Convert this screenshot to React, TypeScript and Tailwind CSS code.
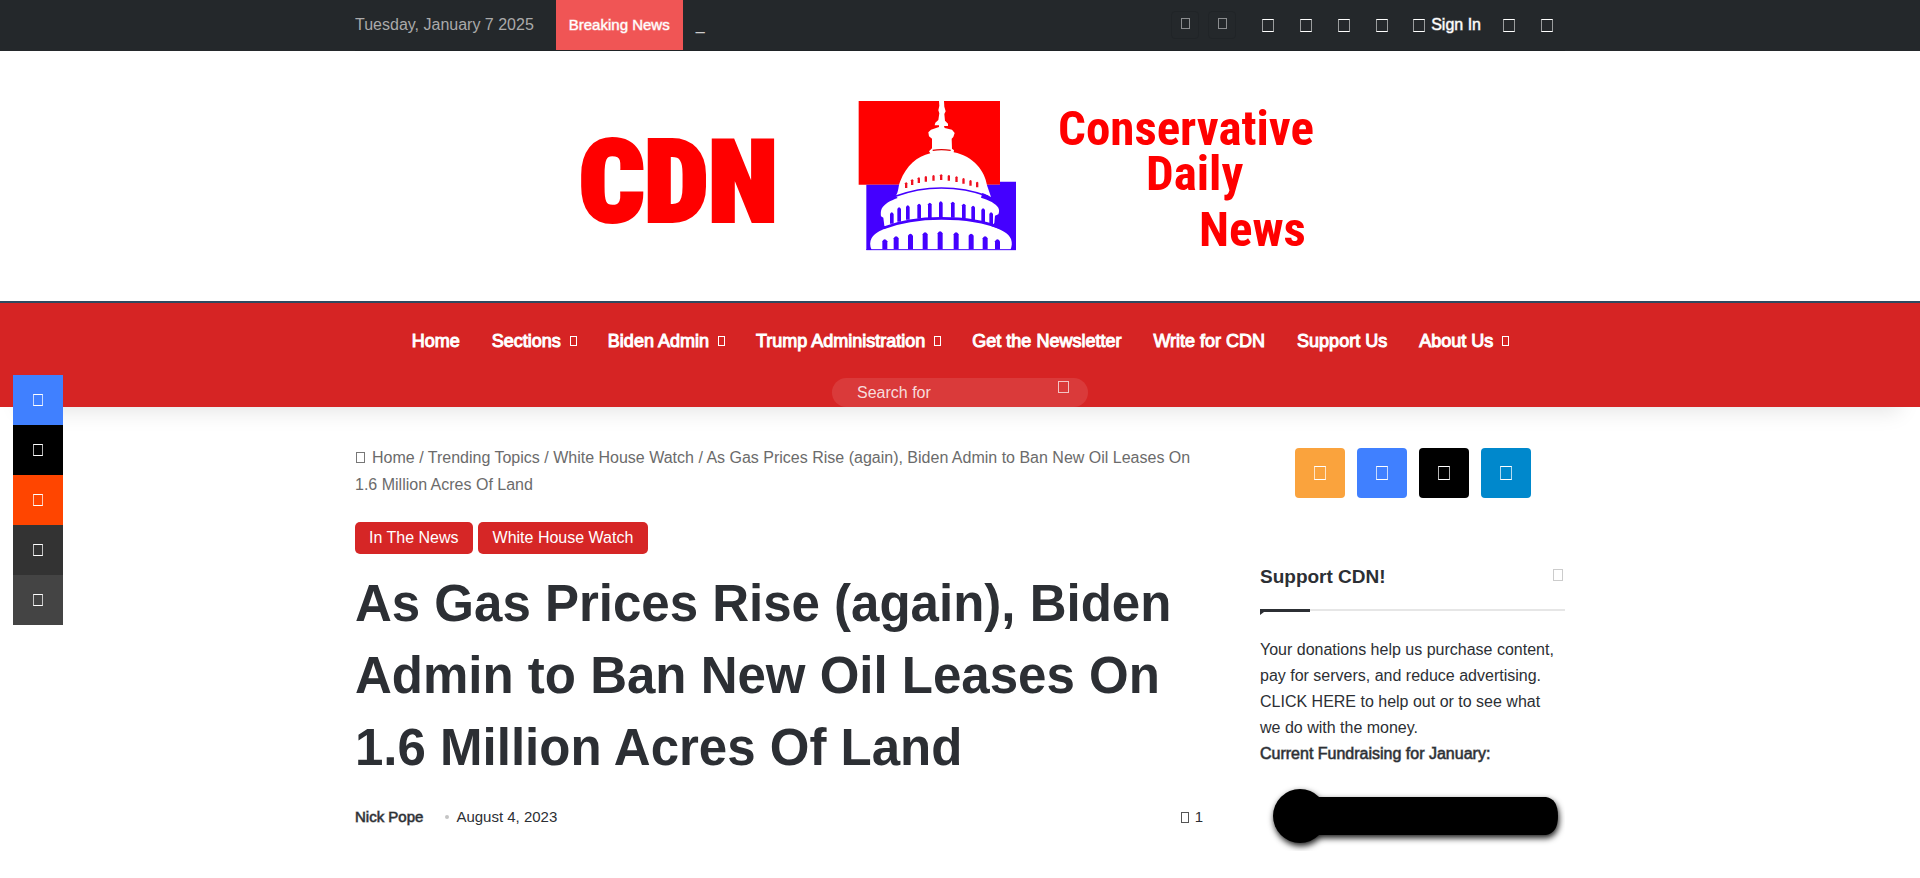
import React from 'react';

function Glyph({ size = 'h-[13px] w-3', tone = 'border-white' }: { size?: string; tone?: string }) {
  return <span aria-hidden="true" className={`inline-block shrink-0 border ${size} ${tone}`} />;
}

const STRONG = '[-webkit-text-stroke:1px_currentColor]';

const NAV = [
  { label: 'Home', menu: false },
  { label: 'Sections', menu: true },
  { label: 'Biden Admin', menu: true },
  { label: 'Trump Administration', menu: true },
  { label: 'Get the Newsletter', menu: false },
  { label: 'Write for CDN', menu: false },
  { label: 'Support Us', menu: false },
  { label: 'About Us', menu: true },
];

const SHARES = [
  { label: 'Facebook', color: 'bg-[#4080ff]' },
  { label: 'X', color: 'bg-black' },
  { label: 'Reddit', color: 'bg-[#ff4500]' },
  { label: 'Share via Email', color: 'bg-[#333333]' },
  { label: 'Print', color: 'bg-[#444444]' },
];

const SOCIALS = [
  { label: 'RSS', color: 'bg-[#faa33d]' },
  { label: 'Facebook', color: 'bg-[#4080ff]' },
  { label: 'X', color: 'bg-black' },
  { label: 'Telegram', color: 'bg-[#0088cc]' },
];

function TopBar() {
  return (
    <div className="bg-[#24282b]">
      <div className="mx-auto flex h-[51px] max-w-[1210px] items-center border-b border-[#1f2326]">
        <span className="text-base text-[#aaaaaa]">Tuesday, January 7 2025</span>
        <span className="ml-[22px] flex h-[50px] items-center bg-[#f05555] px-[13px] text-[15px] text-white">
          <span className="[-webkit-text-stroke:1px_#ffffff80]">Breaking News</span>
        </span>
        <span className="ml-[13px] text-base text-[#cccccc]">_</span>
        <div className="ml-auto flex items-center">
          <div className="flex gap-[9px]">
            {['Previous', 'Next'].map((l) => (
              <button key={l} aria-label={l} className="flex h-7 w-7 items-center justify-center rounded-sm border border-[#202427] pb-1">
                <Glyph size="h-[11px] w-[9px]" tone="border-[#8b8d8f]" />
              </button>
            ))}
          </div>
          {['Facebook', 'X', 'Telegram', 'RSS'].map((l) => (
            <a key={l} href="#" aria-label={l} className="ml-[14px] flex w-6 justify-end">
              <Glyph tone="border-y-white border-x-[#9a9c9d]" />
            </a>
          ))}
          <a href="#" className="ml-[25px] flex items-center gap-[6px] text-base text-white">
            <Glyph tone="border-y-white border-x-[#9a9c9d]" />
            <span className="[-webkit-text-stroke:1px_#ffffff80]">Sign In</span>
          </a>
          <button aria-label="Random Article" className="ml-[22px] flex">
            <Glyph tone="border-y-white border-x-[#9a9c9d]" />
          </button>
          <button aria-label="Sidebar" className="mr-3 ml-[26px] flex">
            <Glyph tone="border-y-white border-x-[#9a9c9d]" />
          </button>
        </div>
      </div>
    </div>
  );
}

const upper = [
  [151, 367, 401], [173, 352, 395], [199, 346, 389], [233, 341, 386], [265, 338, 384],
  [298, 334, 382], [334, 335, 383], [367, 341, 386], [395, 347, 390], [425, 355, 397], [449, 367, 402],
];
const lower = [[127, 448], [161, 439], [204, 431], [248, 427], [293, 424], [341, 427], [386, 431], [428, 439], [465, 448]];
const slots = [[195, 277], [213, 268], [233, 262], [254, 258], [277, 255], [300, 253], [323, 255], [346, 259], [367, 264], [388, 270], [408, 275]];

function Logo() {
  return (
    <svg viewBox="0 0 800 250" className="h-[250px] w-[800px]" role="img" aria-label="Conservative Daily News">
      <g fill="#ff0000" fontWeight="700" fontFamily="'Roboto Condensed', 'Liberation Sans', sans-serif">
        <text x="19" y="170" fontSize="114" fontWeight="900" stroke="#ff0000" strokeWidth="4">CDN</text>
        <text x="498" y="94" fontSize="49">Conservative</text>
        <text x="586" y="139" fontSize="49">Daily</text>
        <text x="639" y="195" fontSize="49">News</text>
      </g>
      <g transform="translate(280 39) scale(0.33333)">
        <path fill="#ff0000" d="M56 33H480V284H56z" />
        <path fill="#4400ff" d="M79 284H480V275H528V480H79z" />
        <path
          fill="#fff"
          d="M297 33h15l1 17 4 14-4 8 2 20 9 9v7h-12l2 6 22 5 8 10-4 12-5 5 1 30 6 5-1 6c60 11 94 58 100 99l12 35c-10-6-18-9-26-12l-4 14c25 7 44 18 52 30 4 8 2 14 0 20l-10 4-2 22-9 10c30 9 52 22 59 38 4 12 3 22-2 33h-20H95c-6-11-6-26 0-36 8-13 22-21 45-31l-7-6-3-24-7-4c-1-8-1-17 2-23 8-14 25-24 48-32l-6-6c10-14 7-30 14-45 18-45 50-74 90-83l-4-6 9-9v-29l-9-7-2-12 8-8 24-8v-5h-13l2-8 9-8 3-20-3-9 3-14z"
        />
        <g fill="none" stroke="#4400ff">
          <path strokeWidth="5" d="M166 319c45-17 90-25 138-25s95 8 140 25" />
          <path strokeWidth="8" d="M130 414c50-20 108-29 174-29s130 9 178 29" />
        </g>
        <path fill="none" stroke="#e00000" strokeWidth="4" d="M278 181q26-4 54 0" />
        <g fill="#4400ff">
          {upper.map(([x, y, b]) => (
            <path key={x} d={`M${x - 1} ${b}V${y + 5}q5-10 11 0V${b}z`} />
          ))}
          {lower.map(([x, y]) => (
            <path key={x} d={`M${x} 478V${y + 6}q7-12 15 0V478z`} />
          ))}
        </g>
        <g fill="#f01020">
          {slots.map(([x, y]) => (
            <path key={x} d={`M${x} ${y + 12}v-9q4-6 7 0v14h-7z`} />
          ))}
        </g>
        <path stroke="#4400ff" strokeWidth="3" d="M79 479H528" />
      </g>
    </svg>
  );
}

function MainNav() {
  return (
    <nav className="border-t-2 border-[#2f4a60] bg-[#d62424] shadow-[0_25px_20px_-20px_rgba(0,0,0,0.1)]">
      <ul className="flex h-[75px] items-center justify-center text-lg text-white">
        {NAV.map(({ label, menu }) => (
          <li key={label}>
            <a href="#" className={`flex items-center gap-[9px] pl-4 whitespace-nowrap ${menu ? 'pr-[15px]' : 'pr-4'}`}>
              <span className={STRONG}>{label}</span>
              {menu && <Glyph size="h-[10px] w-[7px]" />}
            </a>
          </li>
        ))}
      </ul>
      <form className="mx-auto flex h-[29px] w-64 items-center rounded-[15px] bg-white/10 pr-[19px] pl-[25px]">
        <input
          aria-label="Search for"
          placeholder="Search for"
          className="w-full min-w-0 bg-transparent text-base text-white outline-none placeholder:text-[#f7dcdc]"
        />
        <button type="button" aria-label="Search" className="flex pb-3">
          <Glyph size="h-3 w-[11px]" tone="border-[#f3c4c4]" />
        </button>
      </form>
    </nav>
  );
}

function Article() {
  return (
    <main className="min-w-0 flex-1 pt-[37px]">
      <nav aria-label="Breadcrumb" className="text-base leading-[27px] text-[#6b6b6b]">
        <a href="#">
          <span className="mr-[7px] ml-px inline-flex">
            <Glyph size="h-[11px] w-[9px]" tone="border-[#777777]" />
          </span>
          Home
        </a>{' '}
        / <a href="#">Trending Topics</a> / <a href="#">White House Watch</a> / As Gas Prices Rise (again), Biden Admin
        to Ban New Oil Leases On 1.6 Million Acres Of Land
      </nav>
      <div className="mt-6 flex gap-[5px] text-base text-white">
        <a href="#" className="flex h-8 items-center rounded-[5px] bg-[#d62626] px-[14px]">In The News</a>
        <a href="#" className="flex h-8 items-center rounded-[5px] bg-[#d62626] px-[15px]">White House Watch</a>
      </div>
      <h1 className="mt-[14px] text-[51px] leading-[72px] font-bold text-[#2c2f34]">
        As Gas Prices Rise (again), Biden Admin to Ban New Oil Leases On 1.6 Million Acres Of Land
      </h1>
      <div className="mt-[21px] flex items-center text-[15px] leading-6 text-[#2c2f34]">
        <a href="#" className="[-webkit-text-stroke:1px_#2c2f3499]">Nick Pope</a>
        <span aria-hidden="true" className="mr-[7px] ml-[22px] h-1 w-1 rounded-full bg-[#c4c4c4]" />
        <span>August 4, 2023</span>
        <span className="ml-auto flex items-center gap-[6px]">
          <Glyph size="h-[11px] w-2" tone="border-[#555555]" />1
        </span>
      </div>
    </main>
  );
}

function Thermometer() {
  return (
    <svg viewBox="0 0 305 70" className="mt-[14px] h-[70px] w-full" role="img" aria-label="Fundraising progress">
      <defs>
        <filter id="shade" x="-10%" y="-30%" width="120%" height="170%">
          <feDropShadow dx="1" dy="3" stdDeviation="3" floodColor="#000" floodOpacity="0.9" />
        </filter>
      </defs>
      <g filter="url(#shade)">
        <circle cx="40" cy="35" r="27" />
        <path d="M40 16H286Q298 18 298 35Q298 52 286 54H40z" />
      </g>
    </svg>
  );
}

function Sidebar() {
  return (
    <aside className="w-[305px] shrink-0 pt-[41px] text-[#2c2f34]">
      <div className="flex justify-center gap-3">
        {SOCIALS.map(({ label, color }) => (
          <a key={label} href="#" aria-label={label} className={`flex h-[50px] w-[50px] items-center justify-center rounded-sm ${color}`}>
            <Glyph size="h-[14px] w-3" tone="border-y-white border-x-white/70" />
          </a>
        ))}
      </div>
      <section className="mt-[65px]">
        <div className="flex h-[48px] items-start justify-between border-b-2 border-[#e6e6e6]">
          <h2 className="text-[19px] leading-7 font-bold">Support CDN!</h2>
          <span className="mt-[6px] mr-[2px] flex">
            <Glyph size="h-3 w-[10px]" tone="border-[#cccccc]" />
          </span>
        </div>
        <svg viewBox="0 0 50 6" className="-mt-[2px] h-[6px] w-[50px]" aria-hidden="true">
          <path fill="#2c2f34" d="M0 0H50V3H4L0 6z" />
        </svg>
        <p className="mt-[22px] text-base leading-[26px]">
          Your donations help us purchase content, pay for servers, and reduce advertising.{' '}
          <a href="#">CLICK HERE</a> to help out or to see what we do with the money.
          <br />
          <span className="[-webkit-text-stroke:1px_#2c2f3499]">Current Fundraising for January:</span>
        </p>
        <Thermometer />
      </section>
    </aside>
  );
}

export default function App() {
  return (
    <div className="relative min-h-screen bg-white font-['Liberation_Sans',Arial,sans-serif]">
      <TopBar />
      <header>
        <a href="#" className="flex justify-center">
          <Logo />
        </a>
        <MainNav />
      </header>
      <div className="mx-auto flex max-w-[1210px] gap-[57px]">
        <Article />
        <Sidebar />
      </div>
      <div className="fixed top-[375px] left-[13px] w-[50px]">
        {SHARES.map(({ label, color }) => (
          <a key={label} href="#" aria-label={label} className={`flex h-[50px] items-center justify-center ${color}`}>
            <Glyph size="h-3 w-[10px]" tone="border-y-white border-x-white/70" />
          </a>
        ))}
      </div>
    </div>
  );
}
